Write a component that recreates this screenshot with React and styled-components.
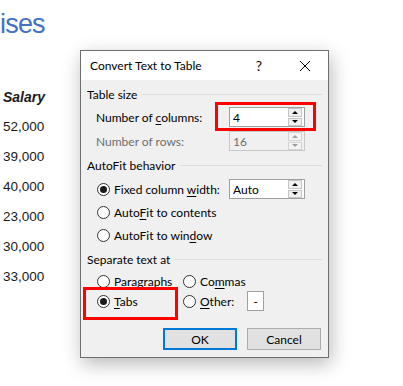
import React from 'react';
import styled, { createGlobalStyle, css } from 'styled-components';

const GlobalStyle = createGlobalStyle`
  html, body {
    margin: 0;
    padding: 0;
    background: #ffffff;
  }
  body {
    width: 403px;
    height: 386px;
    overflow: hidden;
    font-family: Lato, "Noto Sans", sans-serif;
  }
`;

const salaries = ['52,000', '39,000', '40,000', '23,000', '30,000', '33,000'];

const Page = styled.div`
  display: flex;
  width: 403px;
  height: 386px;
`;

const Sheet = styled.div`
  width: 80px;
  flex-shrink: 0;
  display: flex;
  flex-direction: column;
  font-family: "Liberation Sans", sans-serif;
  color: #1a1a1a;
`;

const Heading = styled.div`
  height: 44px;
  padding-top: 7px;
  box-sizing: border-box;
  font-size: 27px;
  line-height: 34px;
  color: #4472c4;
  letter-spacing: -0.8px;
  white-space: nowrap;
`;

const ColHeader = styled.div`
  height: 30px;
  margin-top: 38px;
  padding-left: 3px;
  font-size: 14px;
  font-weight: bold;
  font-style: italic;
  line-height: 30px;
`;

const Cell = styled.div`
  height: 30px;
  padding-left: 3px;
  font-size: 13.5px;
  line-height: 30px;
`;

const Dialog = styled.div`
  margin-top: 50px;
  width: 249px;
  height: 308px;
  box-sizing: border-box;
  border: 1px solid #6e6e6e;
  background: #f0f0f0;
  box-shadow: 2px 6px 18px rgba(0, 0, 0, 0.28);
  display: flex;
  flex-direction: column;
  font-size: 12px;
  color: #000;
  white-space: nowrap;
`;

const TitleBar = styled.div`
  height: 29px;
  background: #ffffff;
  display: flex;
  align-items: center;
  padding-left: 9px;
`;

const Title = styled.div`
  flex: 1;
  font-size: 12px;
`;

const TitleButton = styled.div`
  width: 46px;
  height: 29px;
  display: flex;
  align-items: center;
  justify-content: center;
  font-size: 14px;
`;

const Body = styled.div`
  flex: 1;
  padding: 6px 6px 0 6px;
  display: flex;
  flex-direction: column;
`;

const GroupLabel = styled.div`
  height: ${p => p.$h ?? 16}px;
  display: flex;
  align-items: center;
  gap: 5px;
  margin-bottom: ${p => p.$gap ?? 0}px;

  &::after {
    content: '';
    flex: 1;
    height: 1px;
    background: #dcdcdc;
  }
`;

const Row = styled.div`
  height: ${p => p.$h ?? 24}px;
  display: flex;
  align-items: center;
  padding-left: ${p => p.$indent ?? 9}px;
`;

const FieldLabel = styled.div`
  width: 133px;
  color: ${p => (p.$disabled ? '#6d6d6d' : '#000')};
`;

const Highlight = styled.div`
  position: relative;
  align-self: ${p => (p.$fill ? 'stretch' : 'auto')};
  display: flex;
  align-items: center;

  &::after {
    content: '';
    position: absolute;
    top: ${p => p.$t}px;
    right: ${p => p.$r}px;
    bottom: ${p => p.$b}px;
    left: ${p => p.$l}px;
    border: 3px solid #ff0000;
    pointer-events: none;
  }
`;

const SpinBox = styled.div`
  width: 76px;
  height: 20px;
  box-sizing: border-box;
  border: 1px solid ${p => (p.$disabled ? '#c8c8c8' : '#a0a0a0')};
  background: ${p => (p.$disabled ? '#f0f0f0' : '#ffffff')};
  display: flex;
  align-items: center;
`;

const SpinValue = styled.div`
  flex: 1;
  padding-left: 3px;
  color: ${p => (p.$disabled ? '#6d6d6d' : '#000')};
`;

const SpinButtons = styled.div`
  width: 14px;
  height: 18px;
  margin-right: 2px;
  display: flex;
  flex-direction: column;
  gap: 1px;
`;

const SpinArrow = styled.div`
  flex: 1;
  box-sizing: border-box;
  border: 1px solid ${p => (p.$disabled ? '#d4d4d4' : '#c4c4c4')};
  background: ${p => (p.$disabled ? '#f4f4f4' : '#f0f0f0')};
  display: flex;
  align-items: center;
  justify-content: center;

  &::before {
    content: '';
    width: 0;
    height: 0;
    border-left: 3px solid transparent;
    border-right: 3px solid transparent;
    ${p =>
      p.$down
        ? css`border-top: 3px solid ${p.$disabled ? '#a0a0a0' : '#000'};`
        : css`border-bottom: 3px solid ${p.$disabled ? '#a0a0a0' : '#000'};`}
  }
`;

const RadioItem = styled.div`
  display: flex;
  align-items: center;
  gap: 4px;
  width: ${p => (p.$width ? `${p.$width}px` : 'auto')};
`;

const RadioCircle = styled.span`
  width: 13px;
  height: 13px;
  box-sizing: border-box;
  border-radius: 50%;
  border: 1px solid #333333;
  background: #ffffff;
  display: flex;
  align-items: center;
  justify-content: center;

  &::after {
    content: '';
    width: 7px;
    height: 7px;
    border-radius: 50%;
    background: ${p => (p.$checked ? '#1a1a1a' : 'transparent')};
  }
`;

const TextBox = styled.div`
  width: 17px;
  height: 20px;
  box-sizing: border-box;
  border: 1px solid #a0a0a0;
  background: #ffffff;
  display: flex;
  align-items: center;
  justify-content: center;
  margin-left: 13px;
`;

const Buttons = styled.div`
  display: flex;
  justify-content: flex-end;
  gap: 10px;
  margin-top: 17px;
  padding-right: 1px;
`;

const Button = styled.div`
  width: 74px;
  height: 22px;
  box-sizing: border-box;
  background: #e1e1e1;
  border: ${p => (p.$primary ? '2px solid #0078d7' : '1px solid #adadad')};
  display: flex;
  align-items: center;
  justify-content: center;
`;

const U = styled.span`
  text-decoration: underline;
  text-underline-offset: 2px;
`;

const Spin = ({ value, disabled }) => (
  <SpinBox $disabled={disabled}>
    <SpinValue $disabled={disabled}>{value}</SpinValue>
    <SpinButtons>
      <SpinArrow $disabled={disabled} />
      <SpinArrow $disabled={disabled} $down />
    </SpinButtons>
  </SpinBox>
);

const Radio = ({ checked, width, children }) => (
  <RadioItem $width={width}>
    <RadioCircle $checked={checked} />
    <span>{children}</span>
  </RadioItem>
);

export default function App() {
  return (
    <Page>
      <GlobalStyle />
      <Sheet>
        <Heading>ises</Heading>
        <ColHeader>Salary</ColHeader>
        {salaries.map(s => (
          <Cell key={s}>{s}</Cell>
        ))}
      </Sheet>

      <Dialog>
        <TitleBar>
          <Title>Convert Text to Table</Title>
          <TitleButton>?</TitleButton>
          <TitleButton>
            <svg width="12" height="12" viewBox="0 0 12 12">
              <path d="M1 1L11 11M11 1L1 11" stroke="#000" strokeWidth="1" />
            </svg>
          </TitleButton>
        </TitleBar>

        <Body>
          <GroupLabel $gap={3}>Table size</GroupLabel>
          <Row>
            <FieldLabel>Number of <U>c</U>olumns:</FieldLabel>
            <Highlight $t={-5} $r={-11} $b={-4} $l={-14}>
              <Spin value="4" />
            </Highlight>
          </Row>
          <Row>
            <FieldLabel $disabled>Number of rows:</FieldLabel>
            <Spin value="16" disabled />
          </Row>

          <GroupLabel $h={24}>AutoFit behavior</GroupLabel>
          <Row $indent={10}>
            <RadioItem $width={132}>
              <RadioCircle $checked />
              <span>Fixed column <U>w</U>idth:</span>
            </RadioItem>
            <Spin value="Auto" />
          </Row>
          <Row $indent={10} $h={22}>
            <Radio>Auto<U>F</U>it to contents</Radio>
          </Row>
          <Row $indent={10}>
            <Radio>AutoFit to win<U>d</U>ow</Radio>
          </Row>

          <GroupLabel $h={24}>Separate text at</GroupLabel>
          <Row $indent={10} $h={20}>
            <Radio width={86}>Paragraphs</Radio>
            <Radio>Co<U>m</U>mas</Radio>
          </Row>
          <Row $indent={10} $h={20}>
            <Highlight $fill $t={-4} $r={5} $b={-9} $l={-14}>
              <Radio checked width={86}><U>T</U>abs</Radio>
            </Highlight>
            <Radio><U>O</U>ther:</Radio>
            <TextBox>-</TextBox>
          </Row>

          <Buttons>
            <Button $primary>OK</Button>
            <Button>Cancel</Button>
          </Buttons>
        </Body>
      </Dialog>
    </Page>
  );
}
